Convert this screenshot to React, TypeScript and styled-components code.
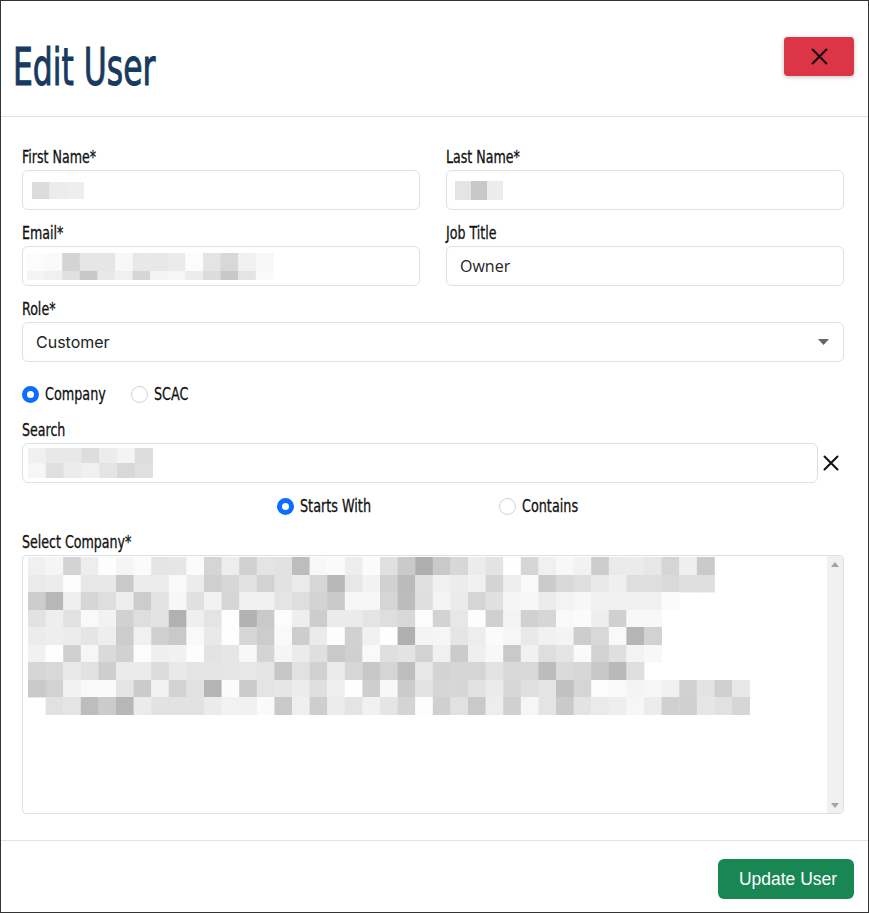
import React from 'react';
import styled, { createGlobalStyle } from 'styled-components';

const Global = createGlobalStyle`
  html, body { margin: 0; padding: 0; background: #fff; }
  body { font-family: "Liberation Sans", Arial, sans-serif; }
  * { box-sizing: border-box; }
`;

const NARROW = `"DejaVu Sans Condensed", "DejaVu Sans", sans-serif`;

const Frame = styled.div`
  width: 869px;
  height: 913px;
  border: 1px solid #333;
  display: flex;
  flex-direction: column;
  background: #fff;
  overflow: hidden;
`;

const Header = styled.header`
  height: 116px;
  flex: none;
  display: flex;
  align-items: flex-start;
  justify-content: space-between;
  padding: 36px 14px 0 12px;
  border-bottom: 1px solid #e2e2e2;
`;

const Title = styled.h1`
  margin: 5px 0 0;
  font-family: ${NARROW};
  font-weight: 400;
  font-size: 51px;
  line-height: 51px;
  color: #173a5e;
  transform: scaleX(0.685);
  transform-origin: left center;
  -webkit-text-stroke: 1px #173a5e;
  white-space: nowrap;
`;

const CloseButton = styled.button`
  width: 70px;
  height: 39px;
  border: none;
  border-radius: 4px;
  background: #dc3545;
  box-shadow: 0 1px 4px rgba(0, 0, 0, 0.25);
  display: flex;
  align-items: center;
  justify-content: center;
  padding: 0;
`;

const Body = styled.main`
  flex: 1;
  padding: 30px 24px 0 21px;
  display: flex;
  flex-direction: column;
`;

const Grid = styled.div`
  display: grid;
  grid-template-columns: 1fr 1fr;
  column-gap: 26px;
  row-gap: 13px;
`;

const Field = styled.div<{ $full?: boolean }>`
  display: flex;
  flex-direction: column;
  grid-column: ${(p) => (p.$full ? '1 / -1' : 'auto')};
`;

const Label = styled.label<{ $top?: number }>`
  display: block;
  width: max-content;
  font-family: ${NARROW};
  font-size: 18px;
  line-height: 20px;
  color: #111;
  margin: ${(p) => p.$top ?? 0}px 0 3px;
  transform: scaleX(0.78);
  transform-origin: left center;
  -webkit-text-stroke: 0.3px #111;
`;

const InputBox = styled.div<{ $pad?: number; $font?: string }>`
  height: 40px;
  border: 1px solid #dcdfe3;
  border-radius: 6px;
  display: flex;
  align-items: center;
  padding-left: ${(p) => p.$pad ?? 13}px;
  padding-right: 14px;
  font-family: ${(p) => p.$font ?? '"Open Sans", sans-serif'};
  font-size: 16px;
  color: #222;
  background: #fff;
`;

const SelectText = styled.span`
  flex: 1;
`;

const RadioRow = styled.div<{ $top: number; $cols: string; $indent: number }>`
  margin-top: ${(p) => p.$top}px;
  height: 24px;
  display: grid;
  grid-template-columns: ${(p) => p.$cols};
  align-items: center;
  padding-left: ${(p) => p.$indent}px;
`;

const RadioOption = styled.span`
  display: inline-flex;
  align-items: center;
  gap: 6px;
  white-space: nowrap;
`;

const RadioText = styled.span`
  display: inline-block;
  font-family: ${NARROW};
  font-size: 18px;
  line-height: 20px;
  color: #111;
  transform: scaleX(0.79);
  transform-origin: left center;
  -webkit-text-stroke: 0.3px #111;
`;

const RadioDot = styled.span<{ $checked?: boolean }>`
  width: 17px;
  height: 17px;
  border-radius: 50%;
  flex: none;
  background: #fff;
  border: ${(p) => (p.$checked ? '5px solid #0d6efd' : '1px solid #cfd2d6')};
`;

const SearchRow = styled.div`
  display: grid;
  grid-template-columns: 1fr 26px;
  align-items: center;
`;

const ClearButton = styled.button`
  border: none;
  background: transparent;
  padding: 0 0 0 5px;
  width: 26px;
  height: 40px;
  display: flex;
  align-items: center;
  justify-content: flex-start;
`;

const ListBox = styled.div`
  height: 259px;
  border: 1px solid #dcdfe3;
  border-radius: 4px;
  display: grid;
  grid-template-columns: 1fr 16px;
  overflow: hidden;
`;

const ListContent = styled.div`
  padding: 1px 0 0 5px;
`;

const ScrollTrack = styled.div`
  background: #f1f1f1;
  display: flex;
  flex-direction: column;
  justify-content: space-between;
  align-items: center;
  padding: 6px 0 5px;
`;

const Footer = styled.footer`
  height: 72px;
  flex: none;
  border-top: 1px solid #e2e2e2;
  display: flex;
  justify-content: flex-end;
  align-items: flex-start;
  padding: 18px 14px 0 0;
`;

const PrimaryButton = styled.button`
  width: 136px;
  height: 40px;
  border: none;
  border-radius: 6px;
  background: #198754;
  color: #fff;
  font-family: "Liberation Sans", Arial, sans-serif;
  font-size: 17.5px;
  padding: 0 0 0 4px;
`;

type MosaicProps = { rows: number[][]; cw: number; heights: number[] };

const Mosaic = ({ rows, cw, heights }: MosaicProps) => {
  const cols = Math.max(...rows.map((r) => r.length));
  const total = heights.reduce((a, b) => a + b, 0);
  let y = 0;
  return (
    <svg width={Math.ceil(cols * cw)} height={total} style={{ display: 'block' }}>
      {rows.map((r, i) => {
        const top = y;
        y += heights[i];
        return r.map((g, j) =>
          g >= 255 ? null : (
            <rect
              key={`${i}-${j}`}
              x={j * cw}
              y={top}
              width={cw + 0.4}
              height={heights[i] + 0.4}
              fill={`rgb(${g},${g},${g})`}
            />
          )
        );
      })}
    </svg>
  );
};

function rng(seed: number) {
  let a = seed;
  return () => {
    a |= 0;
    a = (a + 0x6d2b79f5) | 0;
    let t = Math.imul(a ^ (a >>> 15), 1 | a);
    t = (t + Math.imul(t ^ (t >>> 7), 61 | t)) ^ t;
    return ((t ^ (t >>> 14)) >>> 0) / 4294967296;
  };
}

const bigRows: number[][] = (() => {
  const r = rng(98765);
  const lengths = [39, 39, 37, 36, 36, 36, 35, 41, 41];
  return lengths.map((len, i) => {
    const row: number[] = [];
    for (let j = 0; j < len; j++) {
      if (i === 8 && j === 0) {
        row.push(255);
        continue;
      }
      const x = r();
      let g = x < 0.06 ? 175 + r() * 20 : x < 0.3 ? 200 + r() * 18 : 222 + r() * 32;
      if (i === 6) g -= 16;
      if (i === 2 && j > 30) g = Math.max(g, 240);
      if (i === 1 && j > 33) g = Math.min(Math.max(g, 218), 222);
      row.push(Math.round(Math.min(254, g)));
    }
    return row;
  });
})();

const firstRows = [[220, 236, 238]];
const lastRows = [[228, 200, 236]];
const emailRows = [
  [252, 250, 212, 230, 230, 248, 232, 232, 235, 252, 228, 216, 240, 248],
  [244, 240, 224, 200, 232, 240, 214, 244, 246, 236, 220, 200, 228, 250],
];
const searchRows = [
  [240, 232, 232, 221, 236, 244, 221],
  [246, 224, 236, 240, 228, 216, 224],
];

const XIcon = ({ size = 16 }: { size?: number }) => (
  <svg width={size} height={size} viewBox="0 0 16 16" fill="none">
    <path d="M1.5 1.5 L14.5 14.5 M14.5 1.5 L1.5 14.5" stroke="#111" strokeWidth="2" strokeLinecap="round" />
  </svg>
);

const Caret = () => (
  <svg width="11" height="6" viewBox="0 0 11 6">
    <path d="M0 0 H11 L5.5 6 Z" fill="#666" />
  </svg>
);

const ScrollArrow = ({ up }: { up?: boolean }) => (
  <svg width="8" height="5" viewBox="0 0 8 5">
    <path d={up ? 'M0 5 H8 L4 0 Z' : 'M0 0 H8 L4 5 Z'} fill="#a3a3a3" />
  </svg>
);

export default function App() {
  return (
    <>
      <Global />
      <Frame>
        <Header>
          <Title>Edit User</Title>
          <CloseButton aria-label="Close">
            <XIcon size={17} />
          </CloseButton>
        </Header>
        <Body>
          <Grid>
            <Field>
              <Label>First Name*</Label>
              <InputBox $pad={9}>
                <Mosaic rows={firstRows} cw={17.3} heights={[17]} />
              </InputBox>
            </Field>
            <Field>
              <Label>Last Name*</Label>
              <InputBox $pad={8}>
                <Mosaic rows={lastRows} cw={16} heights={[19]} />
              </InputBox>
            </Field>
            <Field>
              <Label>Email*</Label>
              <InputBox $pad={4}>
                <Mosaic rows={emailRows} cw={17.6} heights={[18, 9]} />
              </InputBox>
            </Field>
            <Field>
              <Label>Job Title</Label>
              <InputBox>Owner</InputBox>
            </Field>
            <Field $full>
              <Label>Role*</Label>
              <InputBox $font={'Inter, "Noto Sans", sans-serif'}>
                <SelectText>Customer</SelectText>
                <Caret />
              </InputBox>
            </Field>
          </Grid>

          <RadioRow $top={20} $cols="109px auto" $indent={0}>
            <RadioOption>
              <RadioDot $checked />
              <RadioText>Company</RadioText>
            </RadioOption>
            <RadioOption>
              <RadioDot />
              <RadioText>SCAC</RadioText>
            </RadioOption>
          </RadioRow>

          <Field>
            <Label $top={14}>Search</Label>
            <SearchRow>
              <InputBox $pad={5}>
                <Mosaic rows={searchRows} cw={17.8} heights={[15, 15]} />
              </InputBox>
              <ClearButton aria-label="Clear">
                <XIcon />
              </ClearButton>
            </SearchRow>
          </Field>

          <RadioRow $top={11} $cols="222px auto" $indent={255}>
            <RadioOption>
              <RadioDot $checked />
              <RadioText>Starts With</RadioText>
            </RadioOption>
            <RadioOption>
              <RadioDot />
              <RadioText>Contains</RadioText>
            </RadioOption>
          </RadioRow>

          <Field>
            <Label $top={14}>Select Company*</Label>
            <ListBox>
              <ListContent>
                <Mosaic rows={bigRows} cw={17.6} heights={[18, 17, 18, 17, 18, 17, 18, 17, 18]} />
              </ListContent>
              <ScrollTrack>
                <ScrollArrow up />
                <ScrollArrow />
              </ScrollTrack>
            </ListBox>
          </Field>
        </Body>
        <Footer>
          <PrimaryButton>Update User</PrimaryButton>
        </Footer>
      </Frame>
    </>
  );
}
